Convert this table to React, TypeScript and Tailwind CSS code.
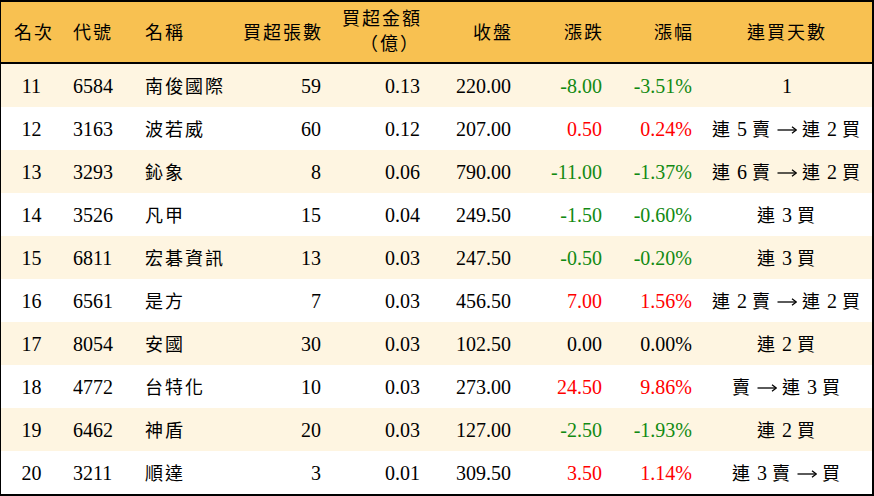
import React from "react";

const COLS = "grid grid-cols-[61px_73px_95px_101px_99px_91px_91px_90px_170px]";

type Row = {
  rank: string;
  code: string;
  name: string;
  vol: string;
  amt: string;
  close: string;
  chg: string;
  pct: string;
  days: string;
};

const rows: Row[] = [
  { rank: "11", code: "6584", name: "南俊國際", vol: "59", amt: "0.13", close: "220.00", chg: "-8.00", pct: "-3.51%", days: "1" },
  { rank: "12", code: "3163", name: "波若威", vol: "60", amt: "0.12", close: "207.00", chg: "0.50", pct: "0.24%", days: "連 5 賣 → 連 2 買" },
  { rank: "13", code: "3293", name: "鈊象", vol: "8", amt: "0.06", close: "790.00", chg: "-11.00", pct: "-1.37%", days: "連 6 賣 → 連 2 買" },
  { rank: "14", code: "3526", name: "凡甲", vol: "15", amt: "0.04", close: "249.50", chg: "-1.50", pct: "-0.60%", days: "連 3 買" },
  { rank: "15", code: "6811", name: "宏碁資訊", vol: "13", amt: "0.03", close: "247.50", chg: "-0.50", pct: "-0.20%", days: "連 3 買" },
  { rank: "16", code: "6561", name: "是方", vol: "7", amt: "0.03", close: "456.50", chg: "7.00", pct: "1.56%", days: "連 2 賣 → 連 2 買" },
  { rank: "17", code: "8054", name: "安國", vol: "30", amt: "0.03", close: "102.50", chg: "0.00", pct: "0.00%", days: "連 2 買" },
  { rank: "18", code: "4772", name: "台特化", vol: "10", amt: "0.03", close: "273.00", chg: "24.50", pct: "9.86%", days: "賣 → 連 3 買" },
  { rank: "19", code: "6462", name: "神盾", vol: "20", amt: "0.03", close: "127.00", chg: "-2.50", pct: "-1.93%", days: "連 2 買" },
  { rank: "20", code: "3211", name: "順達", vol: "3", amt: "0.01", close: "309.50", chg: "3.50", pct: "1.14%", days: "連 3 賣 → 買" },
];

function colorFor(v: string) {
  if (v.startsWith("-")) return "text-[#128a12]";
  if (/^0\.00/.test(v)) return "text-black";
  return "text-[#ff0000]";
}

function Arrow() {
  return (
    <svg
      width="20"
      height="10"
      viewBox="0 0 20 10"
      className="inline-block align-middle -mt-[2px]"
      aria-label="→"
    >
      <line x1="0.5" y1="5" x2="19" y2="5" stroke="#000" strokeWidth="1.3" />
      <path d="M15 1.8 L19.3 5 L15 8.2" fill="none" stroke="#000" strokeWidth="1.3" strokeLinejoin="miter" />
    </svg>
  );
}

function Mixed({ text }: { text: string }) {
  const parts = text.split(/([\u3000-\u9fff\uff00-\uffef]+|→)/).filter((p) => p !== "");
  return (
    <>
      {parts.map((p, i) => {
        if (p === "→") {
          return <Arrow key={i} />;
        }
        if (/[\u3000-\u9fff\uff00-\uffef]/.test(p)) {
          return (
            <span key={i} className="text-[18px] tracking-[2px] text-black">
              {p}
            </span>
          );
        }
        return <span key={i}>{p}</span>;
      })}
    </>
  );
}

export default function App() {
  return (
    <div
      className="w-[874px] h-[496px] bg-white border-l border-t-2 border-r-2 border-b-2 border-black text-[20px] leading-none text-black overflow-hidden"
      style={{ fontFamily: '"Liberation Serif", "Noto Sans CJK TC", serif' }}
    >
      <div className={`${COLS} h-[62px] bg-[#f8c151] border-b-2 border-black items-center`}>
        <div className="pl-[13px]"><Mixed text="名次" /></div>
        <div className="pl-[11px]"><Mixed text="代號" /></div>
        <div className="pl-[10px]"><Mixed text="名稱" /></div>
        <div className="pr-[8px] text-right"><Mixed text="買超張數" /></div>
        <div className="pr-[8px] flex justify-end">
          <div className="flex flex-col items-center leading-[24px] -mt-[2px]">
            <span><Mixed text="買超金額" /></span>
            <span className="pl-[16px]"><Mixed text="（億）" /></span>
          </div>
        </div>
        <div className="pr-[8px] text-right"><Mixed text="收盤" /></div>
        <div className="pr-[8px] text-right"><Mixed text="漲跌" /></div>
        <div className="pr-[8px] text-right"><Mixed text="漲幅" /></div>
        <div className="text-center"><Mixed text="連買天數" /></div>
      </div>
      {rows.map((r, i) => (
        <div
          key={r.rank}
          className={`${COLS} h-[43px] items-center ${i % 2 === 0 ? "bg-[#fef5e1]" : "bg-white"}`}
        >
          <div className="text-center">{r.rank}</div>
          <div className="pl-[11px]">{r.code}</div>
          <div className="pl-[10px]"><Mixed text={r.name} /></div>
          <div className="pr-[10px] text-right">{r.vol}</div>
          <div className="pr-[10px] text-right">{r.amt}</div>
          <div className="pr-[10px] text-right">{r.close}</div>
          <div className={`pr-[10px] text-right ${colorFor(r.chg)}`}>{r.chg}</div>
          <div className={`pr-[10px] text-right ${colorFor(r.pct)}`}>{r.pct}</div>
          <div className="text-center whitespace-pre"><Mixed text={r.days} /></div>
        </div>
      ))}
    </div>
  );
}
